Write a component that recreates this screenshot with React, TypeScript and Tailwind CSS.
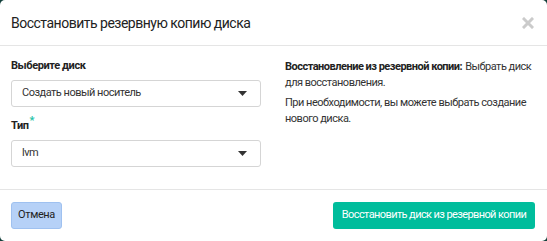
import React from "react";

const font = { fontFamily: 'Roboto, "Liberation Sans", sans-serif' };

function Caret() {
  return (
    <svg width="9" height="5" viewBox="0 0 9 5" className="text-[#333]">
      <path d="M0 0h9L4.5 5z" fill="currentColor" />
    </svg>
  );
}

function CloseIcon() {
  return (
    <svg width="12" height="12" viewBox="0 0 12 12" className="text-[#cbcbcb]">
      <path d="M2 2l8 8M10 2l-8 8" stroke="currentColor" strokeWidth="3" strokeLinecap="square" />
    </svg>
  );
}

function Select({ value }: { value: string }) {
  return (
    <div className="flex h-[27px] w-[250px] items-center justify-between rounded-[3px] border border-[#d5d5d5] bg-white pl-[10px] pr-[13px] text-[11px] tracking-[-0.5px] text-[#333]">
      <span>{value}</span>
      <Caret />
    </div>
  );
}

export default function App() {
  return (
    <div className="h-[241px] w-[547px] bg-[#123f3a]" style={font}>
      <div className="flex h-full flex-col overflow-hidden rounded-[5px] bg-white">
        <div className="flex h-[46px] shrink-0 items-center justify-between border-b border-[#e5e5e5] pl-[11px] pr-[13px]">
          <h1 className="pt-[1px] text-[14px] tracking-[-0.5px] text-[#222]">Восстановить резервную копию диска</h1>
          <CloseIcon />
        </div>

        <div className="flex h-[144px] shrink-0 gap-[24px] border-b border-[#e5e5e5] pl-[11px] pt-[12px]">
          <div className="flex w-[250px] flex-col">
            <label className="mb-[6px] text-[11px] font-bold leading-[16px] tracking-[-0.4px] text-[#222]">Выберите диск</label>
            <Select value="Создать новый носитель" />
            <label className="mb-[6px] mt-[11px] text-[11px] font-bold leading-[16px] tracking-[-0.4px] text-[#222]">
              Тип<sup className="ml-px text-[11px] text-[#22c3a6]">*</sup>
            </label>
            <Select value="lvm" />
          </div>
          <div className="w-[258px] pt-[1px] text-[11px] leading-[16px] tracking-[-0.5px] text-[#333]">
            <p>
              <b className="mr-[3px] text-[#222]">Восстановление из резервной копии:</b>Выбрать диск для восстановления.
            </p>
            <p className="mt-[4px]">При необходимости, вы можете выбрать создание нового диска.</p>
          </div>
        </div>

        <div className="flex flex-1 items-center justify-between pl-[11px] pr-[12px] pb-[1px]">
          <button className="h-[27px] w-[51px] rounded-[3px] border border-[#9fc1f0] bg-[#b6d1f7] text-[11px] tracking-[-0.4px] text-[#222]">
            Отмена
          </button>
          <button className="h-[27px] w-[202px] rounded-[3px] bg-[#00bd9c] text-[11px] tracking-[-0.6px] text-white">
            Восстановить диск из резервной копии
          </button>
        </div>
      </div>
    </div>
  );
}
